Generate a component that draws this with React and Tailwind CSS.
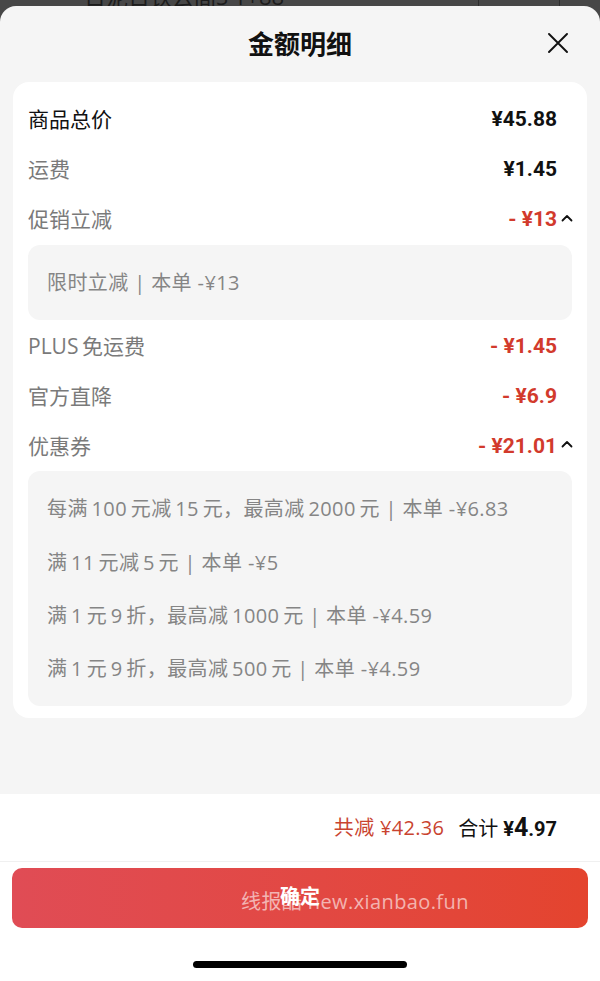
import React from 'react';

const BASE = { fontFamily: '"Open Sans", "Noto Sans CJK SC", sans-serif' };
const NUM = { fontFamily: 'Roboto, "Noto Sans CJK SC", sans-serif' };

const ROWS = [
  { label: '商品总价', value: '¥45.88', strong: true },
  { label: '运费', value: '¥1.45' },
  { label: '促销立减', value: '- ¥13', red: true, open: true, details: ['限时立减 | 本单 -¥13'] },
  { label: 'PLUS\u2009免运费', value: '- ¥1.45', red: true },
  { label: '官方直降', value: '- ¥6.9', red: true },
  {
    label: '优惠券',
    value: '- ¥21.01',
    red: true,
    open: true,
    details: [
      '每满\u2009100\u2009元减\u200915\u2009元，最高减\u20092000\u2009元 | 本单 -¥6.83',
      '满\u200911\u2009元减\u20095\u2009元 | 本单 -¥5',
      '满\u20091\u2009元\u20099\u2009折，最高减\u20091000\u2009元 | 本单 -¥4.59',
      '满\u20091\u2009元\u20099\u2009折，最高减\u2009500\u2009元 | 本单 -¥4.59',
    ],
  },
];

function Caret() {
  return (
    <svg width="12" height="8" viewBox="0 0 12 8" className="ml-[4px] mb-[4px]">
      <polyline points="1.5,6.5 6,2 10.5,6.5" fill="none" stroke="#111" strokeWidth="1.8" strokeLinecap="round" strokeLinejoin="round" />
    </svg>
  );
}

function Row({ row }) {
  return (
    <>
      <div className="flex h-[50px] items-center justify-between pl-[15px] pr-[14px]">
        <span className={`text-[21px] ${row.strong ? 'text-[#111]' : 'text-[#7a7a7a]'}`}>{row.label}</span>
        <div className="flex items-center">
          <span className={`text-[21px] font-bold ${row.red ? 'text-[#d23a2c]' : 'text-[#111]'}`} style={NUM}>{row.value}</span>
          <span className="flex w-[16px] justify-start">{row.open && <Caret />}</span>
        </div>
      </div>
      {row.details && (
        <div className="mx-[15px] mb-px rounded-[12px] bg-[#f5f5f5] py-[11px] pl-[19px]">
          {row.details.map((d, i) => (
            <div key={i} className="text-[20px] leading-[53.25px] tracking-[0.4px] text-[#858585]">{d}</div>
          ))}
        </div>
      )}
    </>
  );
}

export default function App() {
  return (
    <div className="flex h-[981px] w-[600px] flex-col overflow-hidden bg-[#474747]" style={BASE}>
      {/* page behind the sheet */}
      <div className="relative h-[6px] shrink-0 overflow-hidden">
        <div className="absolute left-[84px] top-[-20px] text-[22px] text-[#1c1c1c]">日泥日铁云阁S 1+88</div>
        <div className="absolute left-[478px] top-[-20px] h-[26px] w-[82px] border-x border-[#2e2e2e]" />
      </div>

      <div className="flex flex-1 flex-col rounded-t-[16px] bg-[#f5f5f5]">
        <div className="relative flex h-[76px] items-center justify-center">
          <span className="text-[26px] font-bold text-[#111]">金额明细</span>
          <svg width="20" height="20" viewBox="0 0 20 20" className="absolute right-[32px] top-[27px]">
            <path d="M1 1 L19 19 M19 1 L1 19" stroke="#111" strokeWidth="1.9" strokeLinecap="round" />
          </svg>
        </div>

        <div className="mx-[13px] rounded-[16px] bg-white pb-[11px] pt-[13px]">
          {ROWS.map((r) => (
            <Row key={r.label} row={r} />
          ))}
        </div>

        <div className="flex-1" />

        <div className="flex h-[68px] items-center justify-end gap-[14px] border-b border-[#f0f0f0] bg-white pr-[43px]">
          <span className="text-[20px] tracking-[0.3px] text-[#c9432f]">共减 ¥42.36</span>
          <span className="flex items-baseline text-[20px] text-[#111]">
            合计 <span className="ml-[5px] font-bold" style={NUM}>¥</span>
            <span className="text-[25px] font-bold" style={NUM}>4</span>
            <span className="font-bold" style={NUM}>.97</span>
          </span>
        </div>

        <div className="bg-white px-[12px] pt-[6px]">
          <div className="relative flex h-[60px] items-center justify-center rounded-[10px] bg-gradient-to-r from-[#e04c55] to-[#e4442e]">
            <span className="mb-[2px] text-[20px] font-bold text-white">确定</span>
            <span className="absolute left-[229px] top-[19px] text-[20px] tracking-[0.4px] text-white/60">线报酷 new.xianbao.fun</span>
          </div>
          <div className="flex h-[53px] items-end justify-center pb-[13px]">
            <div className="h-[7px] w-[214px] rounded-full bg-black" />
          </div>
        </div>
      </div>
    </div>
  );
}
